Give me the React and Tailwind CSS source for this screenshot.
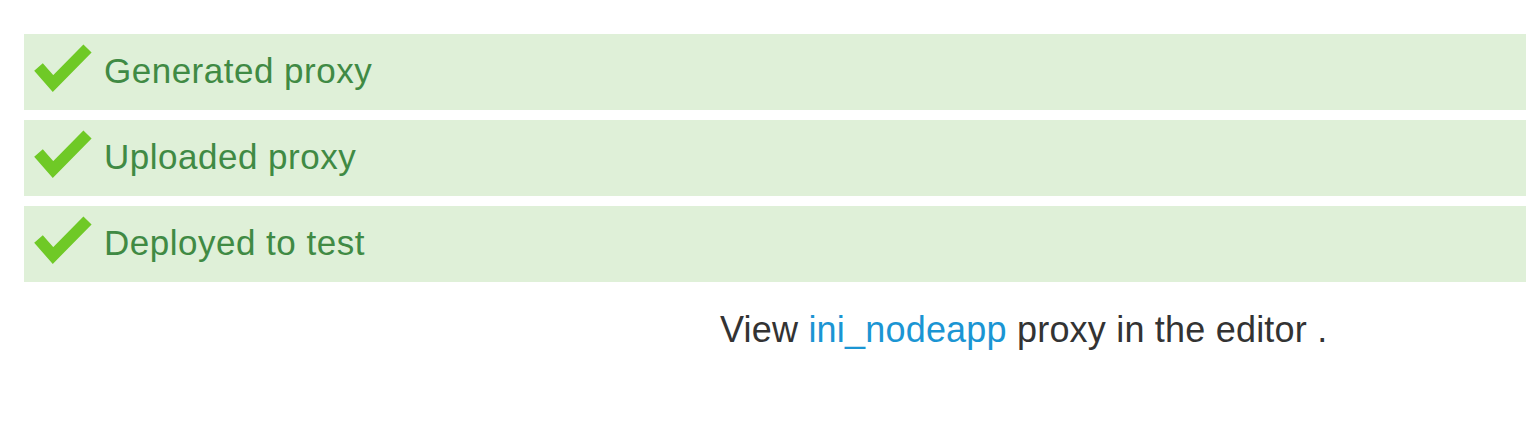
import React from "react";

function Check() {
  return (
    <svg width="64" height="56" viewBox="0 0 64 56" className="shrink-0">
      <polyline
        points="10.5,23 25,39.5 59.5,4.5"
        fill="none"
        stroke="#6fc926"
        strokeWidth="11.5"
        strokeLinejoin="miter"
        strokeLinecap="butt"
      />
    </svg>
  );
}

function Row({ label }) {
  return (
    <div className="h-[76px] bg-[#dff0d8] flex items-center pl-[4px]">
      <Check />
      <span className="ml-[12px] text-[35px] leading-none tracking-[0.5px] text-[#408a44] -mt-[4px]">
        {label}
      </span>
    </div>
  );
}

export default function App() {
  return (
    <div
      className="w-[1526px] h-[428px] bg-white pt-[34px] pl-[24px]"
      style={{ fontFamily: '"Liberation Sans", Arial, sans-serif' }}
    >
      <div className="flex flex-col gap-[10px]">
        <Row label="Generated proxy" />
        <Row label="Uploaded proxy" />
        <Row label="Deployed to test" />
      </div>
      <p className="mt-[28px] pl-[696px] text-[36px] leading-[40px] tracking-[0.2px] text-[#333333]">
        View <span className="text-[#1b95d3]">ini_nodeapp</span> proxy in the editor .
      </p>
    </div>
  );
}
